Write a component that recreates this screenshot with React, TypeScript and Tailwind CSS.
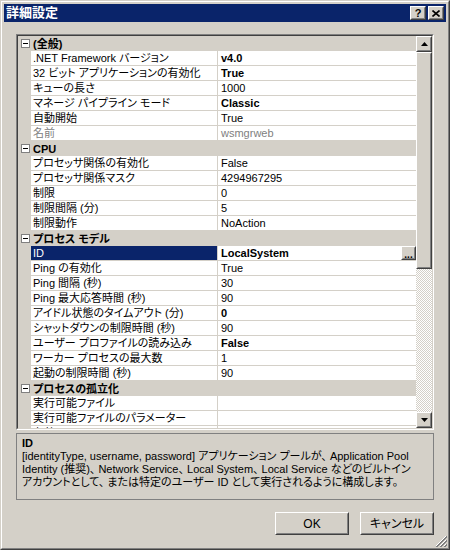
import React from "react";

type Row =
  | { kind: "cat"; label: string }
  | {
      kind: "prop";
      name: string;
      value: string;
      bold?: boolean;
      dim?: boolean;
      selected?: boolean;
    };

const rows: Row[] = [
  { kind: "cat", label: "(全般)" },
  { kind: "prop", name: ".NET Framework バージョン", value: "v4.0", bold: true },
  { kind: "prop", name: "32 ビット アプリケーションの有効化", value: "True", bold: true },
  { kind: "prop", name: "キューの長さ", value: "1000" },
  { kind: "prop", name: "マネージ パイプライン モード", value: "Classic", bold: true },
  { kind: "prop", name: "自動開始", value: "True" },
  { kind: "prop", name: "名前", value: "wsmgrweb", dim: true },
  { kind: "cat", label: "CPU" },
  { kind: "prop", name: "プロセッサ関係の有効化", value: "False" },
  { kind: "prop", name: "プロセッサ関係マスク", value: "4294967295" },
  { kind: "prop", name: "制限", value: "0" },
  { kind: "prop", name: "制限間隔 (分)", value: "5" },
  { kind: "prop", name: "制限動作", value: "NoAction" },
  { kind: "cat", label: "プロセス モデル" },
  { kind: "prop", name: "ID", value: "LocalSystem", bold: true, selected: true },
  { kind: "prop", name: "Ping の有効化", value: "True" },
  { kind: "prop", name: "Ping 間隔 (秒)", value: "30" },
  { kind: "prop", name: "Ping 最大応答時間 (秒)", value: "90" },
  { kind: "prop", name: "アイドル状態のタイムアウト (分)", value: "0", bold: true },
  { kind: "prop", name: "シャットダウンの制限時間 (秒)", value: "90" },
  { kind: "prop", name: "ユーザー プロファイルの読み込み", value: "False", bold: true },
  { kind: "prop", name: "ワーカー プロセスの最大数", value: "1" },
  { kind: "prop", name: "起動の制限時間 (秒)", value: "90" },
  { kind: "cat", label: "プロセスの孤立化" },
  { kind: "prop", name: "実行可能ファイル", value: "" },
  { kind: "prop", name: "実行可能ファイルのパラメーター", value: "" },
  { kind: "prop", name: "有効", value: "" },
];

// classic 3D raised box (buttons, scrollbar parts)
function Raised({ className = "", children }: { className?: string; children?: React.ReactNode }) {
  return (
    <div className={`border border-t-white border-l-white border-b-[#404040] border-r-[#404040] ${className}`}>
      <div className="flex h-full w-full items-center justify-center border border-t-[#d4d0c8] border-l-[#d4d0c8] border-b-[#808080] border-r-[#808080] bg-[#d4d0c8]">
        {children}
      </div>
    </div>
  );
}

function Arrow({ down }: { down?: boolean }) {
  return (
    <svg width="7" height="4" viewBox="0 0 7 4" className="block">
      {down ? <path d="M0 0h7L3.5 4z" fill="#000" /> : <path d="M0 4h7L3.5 0z" fill="#000" />}
    </svg>
  );
}

function Collapse() {
  return (
    <svg width="9" height="9" viewBox="0 0 9 9" className="block">
      <rect x="0.5" y="0.5" width="8" height="8" fill="#fff" stroke="#808080" />
      <path d="M2 4.5h5" stroke="#000" />
    </svg>
  );
}

function GridRow({ row }: { row: Row }) {
  if (row.kind === "cat") {
    return (
      <div className="flex h-[15px] shrink-0 items-center bg-[#d4d0c8]">
        <div className="flex w-[13px] justify-center pl-[1px]">
          <Collapse />
        </div>
        <div className="pl-[2px] font-bold leading-[14px]">{row.label}</div>
      </div>
    );
  }
  return (
    <div className="flex h-[15px] shrink-0">
      <div className="w-[13px] shrink-0 bg-[#d4d0c8]" />
      <div
        className={`w-[187px] shrink-0 overflow-hidden whitespace-nowrap border-r border-b border-[#d4d0c8] pl-[2px] leading-[14px] ${
          row.selected ? "bg-[#0a246a] text-white" : row.dim ? "bg-white text-[#808080]" : "bg-white"
        }`}
      >
        {row.name}
      </div>
      <div
        className={`flex flex-1 items-center justify-between overflow-hidden whitespace-nowrap border-b border-[#d4d0c8] bg-white pl-[3px] leading-[14px] ${
          row.bold ? "font-bold" : ""
        } ${row.dim ? "text-[#808080]" : ""}`}
      >
        <span>{row.value}</span>
        {row.selected && (
          <Raised className="h-[14px] w-[15px]">
            <span className="mt-[3px] text-[10px] leading-[8px]">...</span>
          </Raised>
        )}
      </div>
    </div>
  );
}

export default function App() {
  return (
    <div className="h-[550px] w-[450px] bg-[#d4d0c8] font-['Liberation_Sans','Noto_Sans_CJK_JP',sans-serif] text-[11px] text-black [font-feature-settings:'palt']">
      <div className="h-full w-full border border-t-[#d4d0c8] border-l-[#d4d0c8] border-b-[#404040] border-r-[#404040]">
        <div className="relative flex h-full w-full flex-col border border-t-white border-l-white border-b-[#808080] border-r-[#808080] p-[2px]">
          {/* title bar */}
          <div className="flex h-[18px] shrink-0 items-center justify-between bg-[#0a246a] pl-[2px] pr-[2px]">
            <span className="text-[13px] font-bold leading-[18px] text-white">詳細設定</span>
            <div className="flex gap-[2px]">
              <Raised className="h-[14px] w-[16px]">
                <span className="text-[11px] font-bold leading-[10px]">?</span>
              </Raised>
              <Raised className="h-[14px] w-[16px]">
                <svg width="8" height="7" viewBox="0 0 8 7" className="block">
                  <path d="M0.5 0.5l7 6M7.5 0.5l-7 6" stroke="#000" strokeWidth="1.6" />
                </svg>
              </Raised>
            </div>
          </div>

          {/* body */}
          <div className="flex flex-1 flex-col pl-[12px] pr-[10px] pt-[12px]">
            {/* property grid */}
            <div className="h-[396px] w-[418px] border border-t-[#808080] border-l-[#808080] border-b-white border-r-white">
              <div className="flex h-full w-full border border-t-[#404040] border-l-[#404040] border-b-[#d4d0c8] border-r-[#d4d0c8]">
                <div className="flex flex-1 flex-col overflow-hidden">
                  {rows.map((r, i) => (
                    <GridRow key={i} row={r} />
                  ))}
                </div>
                {/* scrollbar */}
                <div className="flex w-[16px] shrink-0 flex-col">
                  <Raised className="h-[16px] w-[16px] shrink-0">
                    <Arrow />
                  </Raised>
                  <Raised className="h-[217px] w-[16px] shrink-0" />
                  <div className="flex-1 bg-[repeating-conic-gradient(#d4d0c8_0%_25%,#ffffff_0%_50%)] bg-[length:2px_2px]" />
                  <Raised className="h-[16px] w-[16px] shrink-0">
                    <Arrow down />
                  </Raised>
                </div>
              </div>
            </div>

            {/* description */}
            <div className="mt-[3px] h-[67px] w-[418px] border border-[#808080] px-[5px] pt-[2px] leading-[13px]">
              <div className="font-bold leading-[14px]">ID</div>
              <div className="whitespace-nowrap">[identityType, username, password] アプリケーション プールが、 Application Pool</div>
              <div className="whitespace-nowrap">Identity (推奨)、 Network Service、 Local System、 Local Service などのビルトイン</div>
              <div className="whitespace-nowrap">アカウントとして、 または特定のユーザー ID として実行されるように構成します。</div>
            </div>

            {/* buttons */}
            <div className="mt-[12px] flex w-[418px] justify-end gap-[11px] text-[12px]">
              <Raised className="h-[23px] w-[74px]">
                <span className="leading-[14px]">OK</span>
              </Raised>
              <Raised className="h-[23px] w-[74px]">
                <span className="leading-[14px]">キャンセル</span>
              </Raised>
            </div>
          </div>

          {/* size grip */}
          <svg width="12" height="12" viewBox="0 0 12 12" className="absolute bottom-[1px] right-[1px]">
            <path d="M11 1L1 11M11 5L5 11M11 9L9 11" stroke="#ffffff" />
            <path d="M12 1L1 12M12 2L2 12M12 5L5 12M12 6L6 12M12 9L9 12M12 10L10 12" stroke="#808080" />
          </svg>
        </div>
      </div>
    </div>
  );
}
